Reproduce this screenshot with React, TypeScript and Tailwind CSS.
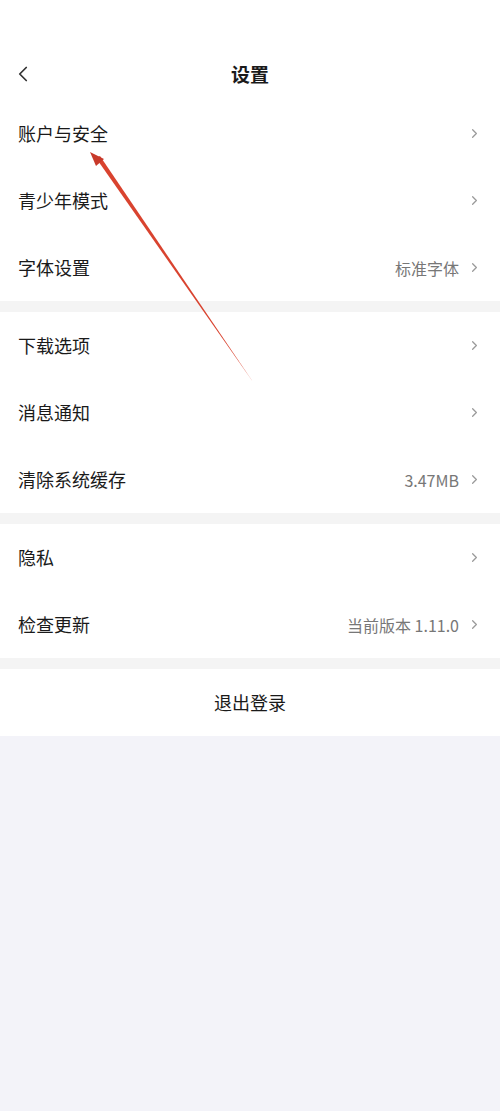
import { ChevronLeft, ChevronRight } from 'lucide-react'

type Row = { label: string; value?: string }

const groups: Row[][] = [
  [{ label: '账户与安全' }, { label: '青少年模式' }, { label: '字体设置', value: '标准字体' }],
  [{ label: '下载选项' }, { label: '消息通知' }, { label: '清除系统缓存', value: '3.47MB' }],
  [{ label: '隐私' }, { label: '检查更新', value: '当前版本 1.11.0' }],
]

function SettingRow({ label, value }: Row) {
  return (
    <div className="flex h-[67px] items-center justify-between pl-[18px] pr-[18px]">
      <span className="text-[18px] text-[#1a1a1a]">{label}</span>
      <div className="flex items-center gap-[8px]">
        {value && <span className="text-[16px] text-[#777]">{value}</span>}
        <ChevronRight className="h-[15px] w-[15px] text-[#9a9a9a]" strokeWidth={2} />
      </div>
    </div>
  )
}

export default function App() {
  return (
    <div
      className="relative flex min-h-[1111px] w-[500px] flex-col bg-[#f3f3f9]"
      style={{ fontFamily: '"Noto Sans CJK SC", "Noto Sans", sans-serif' }}
    >
      <header className="relative flex h-[100px] items-end justify-center bg-white pb-[12px]">
        <ChevronLeft
          className="absolute left-[10px] top-[61px] h-[26px] w-[26px] text-[#333]"
          strokeWidth={1.6}
        />
        <h1 className="text-[19px] font-bold text-[#1a1a1a]">设置</h1>
      </header>

      <div className="flex flex-col gap-[11px] bg-[#f4f4f4]">
        {groups.map((g, i) => (
          <section key={i} className="bg-white">
            {g.map((r) => (
              <SettingRow key={r.label} {...r} />
            ))}
          </section>
        ))}
        <button className="flex h-[67px] items-center justify-center bg-white text-[18px] text-[#1a1a1a]">
          退出登录
        </button>
      </div>

      {/* red annotation arrow */}
      <svg
        className="pointer-events-none absolute left-0 top-0"
        width="500"
        height="400"
        viewBox="0 0 500 400"
      >
        <polygon points="96,158 100,156 253,382" fill="#d9432f" />
        <polygon points="90,152 104,159 96,166" fill="#c8392a" />
      </svg>
    </div>
  )
}
